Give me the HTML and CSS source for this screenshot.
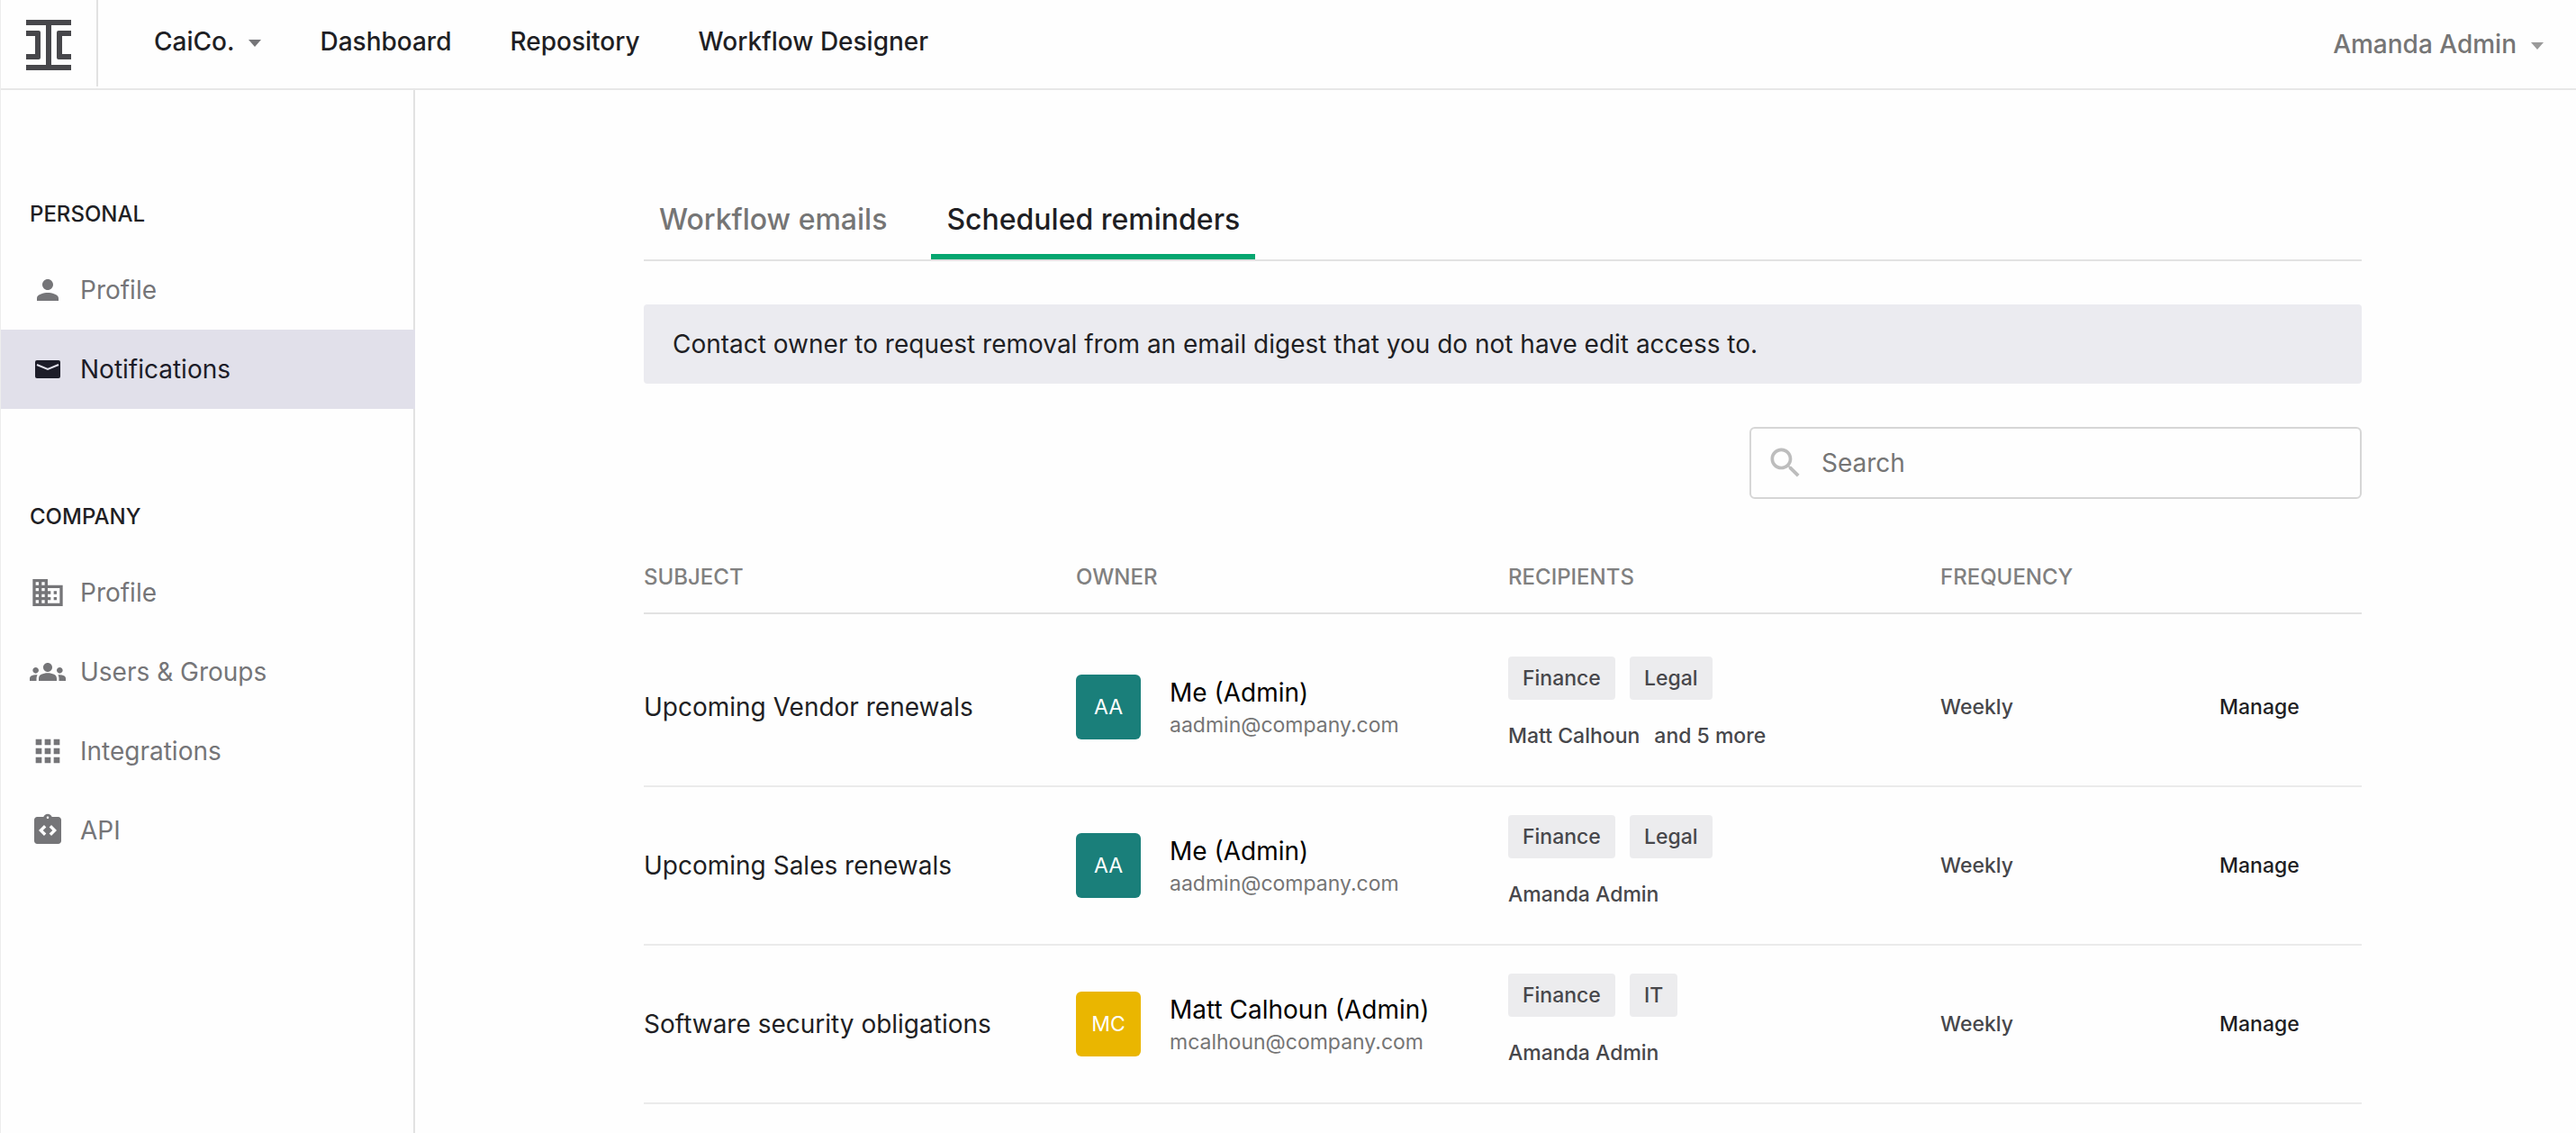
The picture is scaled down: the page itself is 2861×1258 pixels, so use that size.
FILE: index.html
```html
<!DOCTYPE html>
<html lang="en">
<head>
    <meta charset="UTF-8">
    <meta name="viewport" content="width=device-width, initial-scale=1.0">
    <title>Notifications</title>
    <link rel="stylesheet" href="styles.css">
</head>
<body>
    <header class="topbar">
        <a class="logo" href="#" aria-label="Home">
            <svg width="50" height="56" viewBox="0 0 50 56" fill="#47474b">
                <path d="M0 0h50v6H28v44h22v6H0v-6h22V6H0z"/>
                <path d="M0 12h14q2 0 2 2v28q0 2-2 2H0v-6h10V18H0z"/>
                <path d="M50 12H36q-2 0-2 2v28q0 2 2 2h14v-6H40V18h10z"/>
            </svg>
        </a>
        <nav class="main-nav">
            <button class="company" type="button">CaiCo. <span class="caret"></span></button>
            <a href="#">Dashboard</a>
            <a href="#">Repository</a>
            <a href="#">Workflow Designer</a>
        </nav>
        <button class="user" type="button">Amanda Admin <span class="caret"></span></button>
    </header>

    <div class="page">
        <aside class="sidebar">
            <h2>Personal</h2>
            <ul>
                <li><a href="#">
                    <span class="icon"><svg width="36" height="36" viewBox="0 0 24 24"><path d="M12 12c2.2 0 4-1.8 4-4s-1.8-4-4-4-4 1.8-4 4 1.8 4 4 4zm0 2c-2.7 0-8 1.3-8 4v2h16v-2c0-2.7-5.3-4-8-4z"/></svg></span>
                    Profile
                </a></li>
                <li><a class="active" href="#">
                    <span class="icon"><svg width="40" height="40" viewBox="0 0 40 40"><rect x="6" y="10" width="28" height="20" rx="2"/><path d="M8 15l12 5 12-5" fill="none" stroke="#e1e0ea" stroke-width="2"/></svg></span>
                    Notifications
                </a></li>
            </ul>
            <h2>Company</h2>
            <ul>
                <li><a href="#">
                    <span class="icon"><svg width="40" height="40" viewBox="0 0 24 24"><path d="M12 7V3H2v18h20V7H12zM6 19H4v-2h2v2zm0-4H4v-2h2v2zm0-4H4V9h2v2zm0-4H4V5h2v2zm4 12H8v-2h2v2zm0-4H8v-2h2v2zm0-4H8V9h2v2zm0-4H8V5h2v2zm10 12h-8v-2h2v-2h-2v-2h2v-2h-2V9h8v10zm-2-8h-2v2h2v-2zm0 4h-2v2h2v-2z"/></svg></span>
                    Profile
                </a></li>
                <li><a href="#">
                    <span class="icon"><svg width="40" height="40" viewBox="0 0 24 24"><path d="M12 12.75c1.63 0 3.07.39 4.24.9 1.08.48 1.76 1.56 1.76 2.73V18H6v-1.61c0-1.18.68-2.26 1.76-2.73 1.17-.52 2.61-.91 4.24-.91zM4 13c1.1 0 2-.9 2-2s-.9-2-2-2-2 .9-2 2 .9 2 2 2zm1.13 1.1c-.37-.06-.74-.1-1.13-.1-.99 0-1.93.21-2.78.58C.48 14.9 0 15.62 0 16.43V18h4.5v-1.61c0-.83.23-1.61.63-2.29zM20 13c1.1 0 2-.9 2-2s-.9-2-2-2-2 .9-2 2 .9 2 2 2zm4 3.43c0-.81-.48-1.53-1.22-1.85-.85-.37-1.79-.58-2.78-.58-.39 0-.76.04-1.13.1.4.68.63 1.46.63 2.29V18H24v-1.57zM12 6c1.66 0 3 1.34 3 3s-1.34 3-3 3-3-1.34-3-3 1.34-3 3-3z"/></svg></span>
                    Users &amp; Groups
                </a></li>
                <li><a href="#">
                    <span class="icon"><svg width="40" height="40" viewBox="0 0 24 24"><path d="M4 8h4V4H4v4zm6 12h4v-4h-4v4zm-6 0h4v-4H4v4zm0-6h4v-4H4v4zm6 0h4v-4h-4v4zm6-10v4h4V4h-4zm-6 4h4V4h-4v4zm6 6h4v-4h-4v4zm0 6h4v-4h-4v4z"/></svg></span>
                    Integrations
                </a></li>
                <li><a href="#">
                    <span class="icon"><svg width="40" height="40" viewBox="0 0 24 24"><path fill-rule="evenodd" d="M19 3h-4.18C14.4 1.84 13.3 1 12 1s-2.4.84-2.82 2H5c-1.1 0-2 .9-2 2v14c0 1.1.9 2 2 2h14c1.1 0 2-.9 2-2V5c0-1.1-.9-2-2-2zm-8 11.17l-1.41 1.42L6 12l3.59-3.59L11 9.83 8.83 12 11 14.17zm1-9.92c-.41 0-.75-.34-.75-.75s.34-.75.75-.75.75.34.75.75-.34.75-.75.75zm2.41 11.34L13 14.17 15.17 12 13 9.83l1.41-1.42L18 12l-3.59 3.59z"/></svg></span>
                    API
                </a></li>
            </ul>
        </aside>

        <main class="content">
            <nav class="tabs">
                <a href="#">Workflow emails</a>
                <a class="active" href="#">Scheduled reminders</a>
            </nav>

            <p class="notice">Contact owner to request removal from an email digest that you do not have edit access to.</p>

            <label class="search">
                <svg width="44" height="44" viewBox="0 0 24 24" fill="#bdbdbd"><path d="M15.5 14h-.79l-.28-.27C15.41 12.59 16 11.11 16 9.5 16 5.91 13.09 3 9.5 3S3 5.91 3 9.5 5.91 16 9.5 16c1.61 0 3.09-.59 4.23-1.57l.27.28v.79l5 4.99L20.49 19l-4.99-5zm-6 0C7.01 14 5 11.99 5 9.5S7.01 5 9.5 5 14 7.01 14 9.5 11.99 14 9.5 14z"/></svg>
                <input type="text" placeholder="Search" aria-label="Search">
            </label>

            <table class="reminders">
                <colgroup>
                    <col class="col-wide">
                    <col class="col-wide">
                    <col class="col-wide">
                    <col class="col-frequency">
                    <col class="col-action">
                </colgroup>
                <thead>
                    <tr>
                        <th>Subject</th>
                        <th>Owner</th>
                        <th>Recipients</th>
                        <th>Frequency</th>
                        <th></th>
                    </tr>
                </thead>
                <tbody>
                    <tr>
                        <td class="subject">Upcoming Vendor renewals</td>
                        <td>
                            <div class="owner">
                                <span class="avatar teal">AA</span>
                                <div class="owner-text">
                                    <div class="name">Me (Admin)</div>
                                    <div class="email">aadmin@company.com</div>
                                </div>
                            </div>
                        </td>
                        <td>
                            <div class="tags"><span class="tag">Finance</span><span class="tag">Legal</span></div>
                            <div class="people"><span>Matt Calhoun</span><span>and 5 more</span></div>
                        </td>
                        <td>Weekly</td>
                        <td><button class="manage" type="button">Manage</button></td>
                    </tr>
                    <tr>
                        <td class="subject">Upcoming Sales renewals</td>
                        <td>
                            <div class="owner">
                                <span class="avatar teal">AA</span>
                                <div class="owner-text">
                                    <div class="name">Me (Admin)</div>
                                    <div class="email">aadmin@company.com</div>
                                </div>
                            </div>
                        </td>
                        <td>
                            <div class="tags"><span class="tag">Finance</span><span class="tag">Legal</span></div>
                            <div class="people"><span>Amanda Admin</span></div>
                        </td>
                        <td>Weekly</td>
                        <td><button class="manage" type="button">Manage</button></td>
                    </tr>
                    <tr>
                        <td class="subject">Software security obligations</td>
                        <td>
                            <div class="owner">
                                <span class="avatar yellow">MC</span>
                                <div class="owner-text">
                                    <div class="name">Matt Calhoun (Admin)</div>
                                    <div class="email">mcalhoun@company.com</div>
                                </div>
                            </div>
                        </td>
                        <td>
                            <div class="tags"><span class="tag">Finance</span><span class="tag">IT</span></div>
                            <div class="people"><span>Amanda Admin</span></div>
                        </td>
                        <td>Weekly</td>
                        <td><button class="manage" type="button">Manage</button></td>
                    </tr>
                </tbody>
            </table>
        </main>
    </div>
</body>
</html>
```
FILE: styles.css
```css
*{
    box-sizing: border-box;
}
body{
    display: flex;
    flex-direction: column;
    min-height: 100vh;
    margin: 0;
    border-left: 1px solid #ededed;
    background-color: #fefefe;
    color: #1f1f24;
    font-family: Inter, "Liberation Sans", sans-serif;
    font-size: 28px;
    line-height: 36px;
}
a{
    color: inherit;
    text-decoration: none;
}
button{
    padding: 0;
    border: 0;
    background: none;
    color: inherit;
    font: inherit;
    cursor: pointer;
}
svg{
    display: block;
}

/* top bar */
.topbar{
    display: flex;
    align-items: center;
    height: 100px;
    padding-right: 36px;
    border-bottom: 2px solid #e7e7e7;
}
.logo{
    display: flex;
    align-items: center;
    align-self: flex-start;
    height: 96px;
    padding: 4px 28px 0;
    border-right: 2px solid #e2e2e2;
}
.main-nav{
    display: flex;
    gap: 65px;
    flex: 1;
    padding: 0 0 6px 62px;
    font-weight: 500;
}
.company, .user{
    display: flex;
    align-items: center;
    gap: 16px;
}
.user{
    color: #757575;
    font-weight: 500;
}
.caret{
    border: 7px solid transparent;
    border-top: 8px solid #757578;
    border-bottom: 0;
    margin-top: 4px;
}
.user .caret{
    border-top-color: #9a9a9a;
}

.page{
    display: flex;
    flex: 1;
}

/* sidebar */
.sidebar{
    width: 460px;
    flex-shrink: 0;
    padding-top: 120px;
    border-right: 2px solid #e2e2e2;
}
.sidebar h2{
    margin: 0 0 22px;
    padding-left: 32px;
    font-size: 24px;
    font-weight: 500;
    text-transform: uppercase;
}
.sidebar ul{
    margin: 0 0 102px;
    padding: 0;
    list-style: none;
}
.sidebar a{
    display: flex;
    align-items: center;
    gap: 16px;
    height: 88px;
    padding-left: 32px;
    color: #757578;
}
.sidebar a.active{
    margin-right: -2px;
    background-color: #e1e0ea;
    color: #1c1c28;
}
.icon{
    display: flex;
    justify-content: center;
    width: 40px;
    fill: currentColor;
}

/* content */
.content{
    flex: 1;
    padding: 100px 238px 24px 254px;
}
.tabs{
    display: flex;
    gap: 32px;
    border-bottom: 2px solid #e2e2e2;
}
.tabs a{
    padding: 26px 17px 20px;
    border-bottom: 6px solid transparent;
    color: #757575;
    font-size: 32px;
    font-weight: 500;
}
.tabs a.active{
    border-bottom-color: #05a670;
    color: #1f1f24;
}
.notice{
    margin: 48px 0;
    padding: 26px 32px;
    border-radius: 4px;
    background-color: #ebebf0;
}
.search{
    display: flex;
    align-items: center;
    gap: 18px;
    width: 680px;
    height: 80px;
    margin-left: auto;
    padding: 0 16px;
    border: 2px solid #d6d6d6;
    border-radius: 6px;
}
.search input{
    flex: 1;
    min-width: 0;
    padding: 0;
    border: 0;
    outline: 0;
    background: none;
    color: inherit;
    font: inherit;
}
.search input::placeholder{
    color: #757575;
    opacity: 1;
}

/* reminders table */
.reminders{
    width: 100%;
    margin-top: 48px;
    border-spacing: 0;
    table-layout: fixed;
}
.col-wide{
    width: 480px;
}
.col-frequency{
    width: 310px;
}
.col-action{
    width: 158px;
}
.reminders th{
    height: 80px;
    padding: 0;
    border-bottom: 2px solid #e2e2e2;
    color: #808080;
    font-size: 24px;
    font-weight: 500;
    text-align: left;
    text-transform: uppercase;
}
.reminders td{
    height: 176px;
    padding: 0;
    border-bottom: 2px solid #ebebeb;
    color: #47474b;
    font-size: 23px;
    font-weight: 500;
}
.reminders tbody tr:first-child td{
    height: 192px;
    padding-top: 16px;
}
.reminders .subject{
    color: #1f1f24;
    font-size: 28px;
    font-weight: 400;
}
.owner{
    display: flex;
    align-items: center;
    gap: 32px;
    font-weight: 400;
}
.owner-text{
    padding-top: 4px;
}
.avatar{
    width: 72px;
    border-radius: 6px;
    color: #fff;
    line-height: 72px;
    text-align: center;
}
.teal{
    background-color: #1a7f7a;
}
.yellow{
    background-color: #eab600;
}
.name{
    color: #000;
    font-size: 28px;
}
.email{
    color: #757575;
}
.tags, .people{
    display: flex;
    gap: 16px;
}
.tag{
    padding: 6px 16px;
    border-radius: 4px;
    background-color: #ececee;
}
.people{
    margin: 22px 0 6px;
}
.manage{
    color: #1f1f24;
}
```
